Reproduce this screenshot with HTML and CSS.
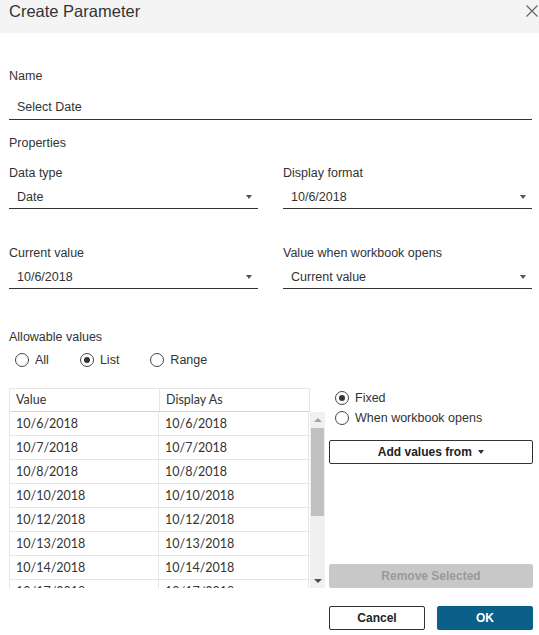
FILE: index.html
```html
<!DOCTYPE html>
<html>
<head>
<meta charset="utf-8">
<link rel="stylesheet" href="styles.css">
</head>
<body>
<div class="dialog">
  <header class="hdr">
    <span class="title">Create Parameter</span>
    <svg class="close" width="12" height="12" viewBox="0 0 12 12"><path d="M0.5 0.5 L11.5 11.5 M11.5 0.5 L0.5 11.5" stroke="#666" stroke-width="1.2" fill="none"/></svg>
  </header>
  <main class="content">
    <div class="lbl name-lbl">Name</div>
    <div class="text-input">Select Date</div>
    <div class="lbl section">Properties</div>
    <div class="grid">
      <div class="field">
        <div class="lbl">Data type</div>
        <div class="select"><span>Date</span><i class="caret"></i></div>
      </div>
      <div class="field">
        <div class="lbl">Display format</div>
        <div class="select"><span>10/6/2018</span><i class="caret"></i></div>
      </div>
      <div class="field row2">
        <div class="lbl">Current value</div>
        <div class="select"><span>10/6/2018</span><i class="caret"></i></div>
      </div>
      <div class="field row2">
        <div class="lbl">Value when workbook opens</div>
        <div class="select"><span>Current value</span><i class="caret"></i></div>
      </div>
    </div>
    <div class="lbl allow">Allowable values</div>
    <div class="radios">
      <label class="radio"><i class="dot"></i>All</label>
      <label class="radio"><i class="dot on"></i>List</label>
      <label class="radio"><i class="dot"></i>Range</label>
    </div>
    <div class="list-area">
      <div class="table">
        <div class="thead">
          <div class="cell">Value</div>
          <div class="cell">Display As</div>
        </div>
        <div class="tbody-wrap">
          <div class="tbody">
            <div class="tr"><div class="cell">10/6/2018</div><div class="cell">10/6/2018</div></div>
            <div class="tr"><div class="cell">10/7/2018</div><div class="cell">10/7/2018</div></div>
            <div class="tr"><div class="cell">10/8/2018</div><div class="cell">10/8/2018</div></div>
            <div class="tr"><div class="cell">10/10/2018</div><div class="cell">10/10/2018</div></div>
            <div class="tr"><div class="cell">10/12/2018</div><div class="cell">10/12/2018</div></div>
            <div class="tr"><div class="cell">10/13/2018</div><div class="cell">10/13/2018</div></div>
            <div class="tr"><div class="cell">10/14/2018</div><div class="cell">10/14/2018</div></div>
            <div class="tr"><div class="cell">10/17/2018</div><div class="cell">10/17/2018</div></div>
          </div>
          <div class="scrollbar">
            <i class="arrow up"></i>
            <div class="thumb"></div>
            <i class="arrow down"></i>
          </div>
        </div>
      </div>
      <div class="side">
        <div class="side-radios">
          <label class="radio"><i class="dot on"></i>Fixed</label>
          <label class="radio"><i class="dot"></i>When workbook opens</label>
        </div>
        <button class="btn outline add">Add values from <i class="caret dark"></i></button>
        <button class="btn disabled remove">Remove Selected</button>
      </div>
    </div>
    <div class="footer">
      <button class="btn outline">Cancel</button>
      <button class="btn primary">OK</button>
    </div>
  </main>
</div>
</body>
</html>
```
FILE: styles.css
```css
* { box-sizing: border-box; }
html, body { margin: 0; padding: 0; background: #fff; }
body {
  width: 539px;
  height: 635px;
  overflow: hidden;
  font-family: "Liberation Sans", Arial, sans-serif;
  font-size: 12.5px;
  color: #333;
}
.hdr {
  height: 33px;
  background: #f4f4f4;
  display: flex;
  justify-content: space-between;
  align-items: flex-start;
  padding: 0 1px 0 9px;
}
.title {
  font-size: 16.5px;
  line-height: 22px;
  color: #333;
}
.close { margin-top: 5px; }
.content {
  padding: 36px 7px 0 9px;
}
.lbl { line-height: 15px; }
.text-input {
  margin-top: 12px;
  height: 24px;
  line-height: 23px;
  padding-left: 8px;
  border-bottom: 1px solid #333;
}
.section { margin-top: 16px; }
.grid {
  margin-top: 15px;
  display: grid;
  grid-template-columns: 249px 249px;
  column-gap: 25px;
}
.row2 { margin-top: 37px; }
.select {
  margin-top: 4px;
  height: 24px;
  border-bottom: 1px solid #333;
  display: flex;
  align-items: center;
  justify-content: space-between;
  padding: 0 6px 0 8px;
}
.caret {
  display: inline-block;
  width: 0; height: 0;
  border-left: 3.5px solid transparent;
  border-right: 3.5px solid transparent;
  border-top: 4px solid #555;
}
.caret.dark { border-top-color: #333; margin-left: 3px; vertical-align: 2px; }
.allow { margin-top: 41px; }
.radios {
  margin-top: 7px;
  display: flex;
  gap: 31px;
  padding-left: 6px;
}
.radio {
  display: flex;
  align-items: center;
  height: 15px;
  gap: 6px;
}
.dot {
  width: 14px; height: 14px;
  border: 1px solid #444;
  border-radius: 50%;
  display: inline-flex;
  align-items: center;
  justify-content: center;
  flex: none;
}
.dot.on::after {
  content: "";
  width: 6px; height: 6px;
  border-radius: 50%;
  background: #333;
}
.list-area {
  margin-top: 21px;
  display: flex;
  gap: 4px;
}
.table {
  width: 316px;
  font-family: Lato, "Liberation Sans", sans-serif;
  font-size: 12.5px;
  color: #333;
}
.thead {
  display: flex;
  width: 301px;
  border: 1px solid #e6e6e6;
  border-bottom-color: #d4d4d4;
  height: 24px;
}
.thead .cell:first-child { border-right: 1px solid #e6e6e6; }
.cell {
  width: 150px;
  padding-left: 6px;
  line-height: 22px;
}
.thead .cell:last-child { width: 149px; }
.tbody-wrap {
  display: flex;
  height: 176px;
}
.tbody {
  width: 301px;
  overflow: hidden;
  border-left: 1px solid #e6e6e6;
}
.tr {
  display: flex;
  height: 24px;
  border-bottom: 1px solid #e6e6e6;
}
.tr .cell {
  line-height: 23px;
  border-right: 1px solid #e6e6e6;
}
.tr .cell:first-child { width: 149px; }
.scrollbar {
  width: 15px;
  background: #f0f0f0;
  display: flex;
  flex-direction: column;
  align-items: center;
}
.arrow {
  width: 0; height: 0;
  border-left: 4px solid transparent;
  border-right: 4px solid transparent;
}
.arrow.up { border-bottom: 4px solid #a3a3a3; margin-top: 6px; }
.arrow.down { border-top: 4px solid #505050; margin-top: auto; margin-bottom: 5px; }
.thumb {
  width: 13px;
  height: 88px;
  background: #c1c1c1;
  margin-top: 6px;
}
.side {
  flex: 1;
  display: flex;
  flex-direction: column;
  margin-right: -1px;
}
.side-radios {
  margin-top: 2px;
  padding-left: 6px;
  display: flex;
  flex-direction: column;
  gap: 5px;
}
.btn {
  font-family: "Liberation Sans", Arial, sans-serif;
  font-size: 12px;
  font-weight: bold;
  height: 24px;
  border-radius: 2px;
  padding: 0;
  cursor: pointer;
}
.outline {
  background: #fff;
  border: 1px solid #333;
  color: #222;
}
.add { margin-top: 15px; width: 100%; }
.remove {
  margin-top: auto;
  width: 100%;
  background: #c8c8c8;
  border: 1px solid #c8c8c8;
  color: #9a9a9a;
}
.footer {
  margin-top: 18px;
  display: flex;
  justify-content: flex-end;
  gap: 12px;
  margin-right: -1px;
}
.footer .btn { width: 96px; }
.primary {
  background: #0b6089;
  border: 1px solid #0b6089;
  color: #fff;
}
```
